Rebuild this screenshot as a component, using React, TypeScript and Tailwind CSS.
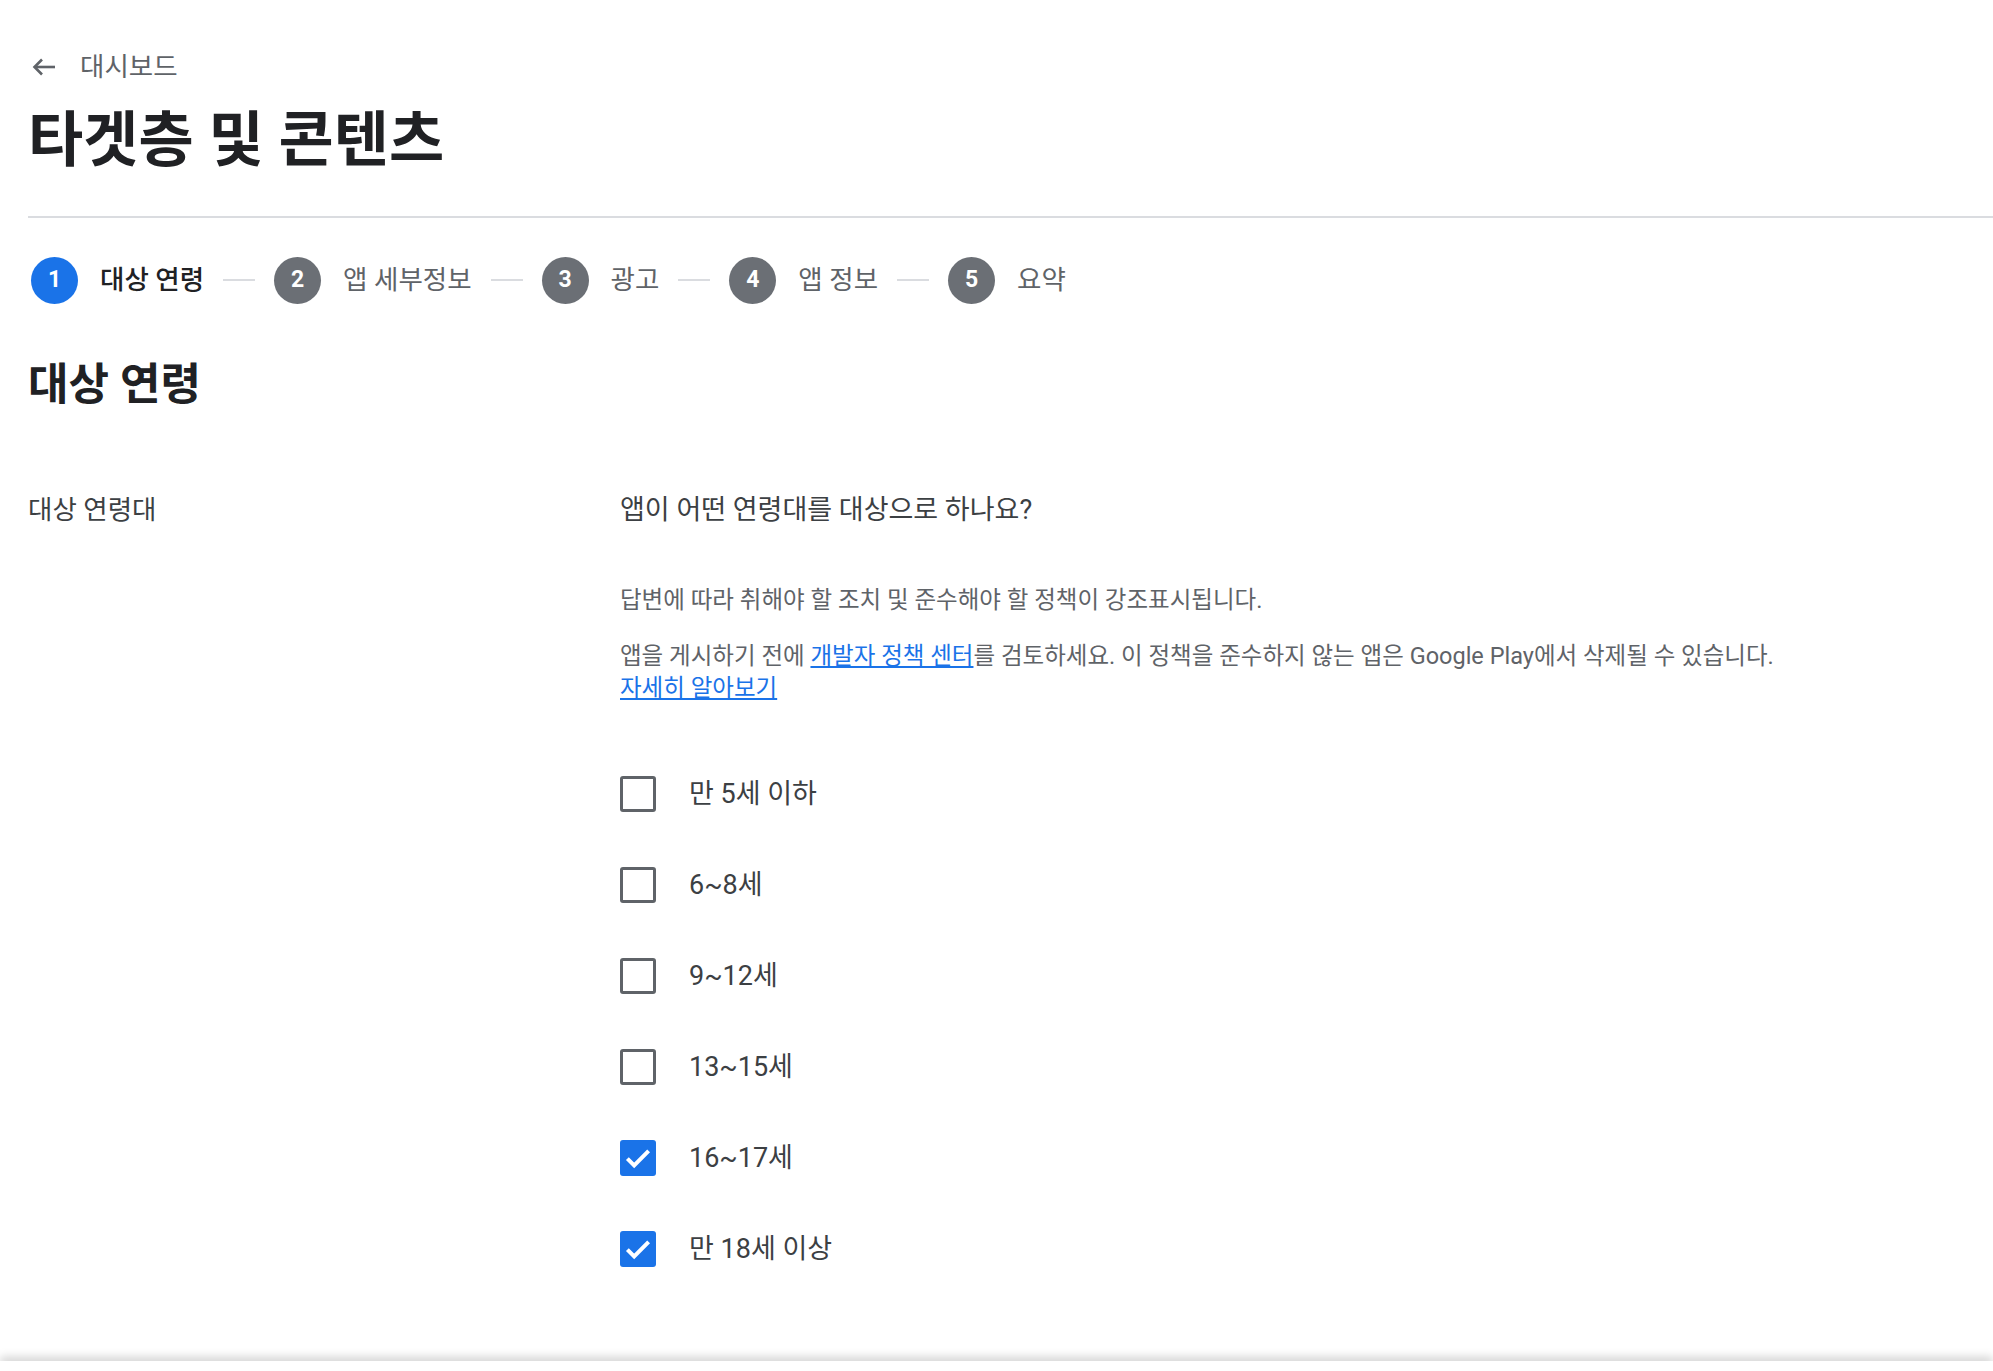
import { Fragment } from "react";

const FONT = "font-['Roboto','Noto_Sans_CJK_KR',sans-serif]";

const steps = ["대상 연령", "앱 세부정보", "광고", "앱 정보", "요약"];

const ages = [
  { label: "만 5세 이하", checked: false },
  { label: "6~8세", checked: false },
  { label: "9~12세", checked: false },
  { label: "13~15세", checked: false },
  { label: "16~17세", checked: true },
  { label: "만 18세 이상", checked: true },
];

function BackArrow() {
  return (
    <svg width="24" height="18" viewBox="0 0 24 18" fill="none" stroke="#5f6368" strokeWidth="2.6">
      <path d="M23 9H3" />
      <path d="M10 1.5 2.5 9l7.5 7.5" />
    </svg>
  );
}

function Checkbox({ checked }: { checked: boolean }) {
  if (checked) {
    return (
      <div className="flex h-[36px] w-[36px] items-center justify-center rounded-[3px] bg-[#1a73e8]">
        <svg width="34" height="34" viewBox="0 0 24 24" fill="none" stroke="#fff" strokeWidth="2.8">
          <path d="M4.5 12.5 9.3 17.3 19.5 7" />
        </svg>
      </div>
    );
  }
  return <div className="h-[36px] w-[36px] rounded-[3px] border-[3.5px] border-[#5f6368]" />;
}

function Stepper() {
  return (
    <div className="flex h-[48px] items-center">
      {steps.map((s, i) => (
        <Fragment key={s}>
          {i > 0 && <div className="mx-[19px] h-[2px] w-[32px] bg-[#dadce0]" />}
          <div className="flex items-center gap-[22px]">
            <div
              className={
                i === 0
                  ? "flex h-[47px] w-[47px] items-center justify-center rounded-full bg-[#1a73e8] text-[23px] font-bold text-white"
                  : "flex h-[47px] w-[47px] items-center justify-center rounded-full bg-[#6b6f75] text-[23px] font-bold text-white"
              }
            >
              {i + 1}
            </div>
            <span
              className={
                i === 0
                  ? "text-[26.5px] font-medium text-[#202124]"
                  : "text-[26.5px] text-[#5f6368]"
              }
            >
              {s}
            </span>
          </div>
        </Fragment>
      ))}
    </div>
  );
}

export default function App() {
  return (
    <div className={`${FONT} flex h-screen flex-col overflow-hidden bg-white`}>
      <div className="flex-1 overflow-hidden pl-[28px] pt-[47px]">
        <div className="flex h-[40px] items-center gap-[24px] pl-[4px]">
          <BackArrow />
          <span className="text-[26.5px] text-[#5f6368]">대시보드</span>
        </div>

        <h1 className="mt-[22px] text-[60px] font-bold leading-[64px] text-[#202124]">타겟층 및 콘텐츠</h1>

        <div className="mt-[43px] h-[2px] bg-[#dadce0]" />

        <div className="mt-[38px] pl-[3px]">
          <Stepper />
        </div>

        <h2 className="mt-[57px] text-[44px] font-bold leading-[48px] text-[#202124]">대상 연령</h2>

        <div className="mt-[83px] grid grid-cols-[592px_1fr]">
          <div className="text-[26.5px] leading-[36px] text-[#3c4043]">대상 연령대</div>
          <div>
            <div className="text-[27px] leading-[36px] text-[#3c4043]">앱이 어떤 연령대를 대상으로 하나요?</div>
            <p className="mt-[56px] text-[23.5px] leading-[32px] text-[#5f6368]">
              답변에 따라 취해야 할 조치 및 준수해야 할 정책이 강조표시됩니다.
            </p>
            <p className="mt-[24px] text-[23.5px] leading-[32px] text-[#5f6368]">
              앱을 게시하기 전에{" "}
              <a href="#" className="text-[#1a73e8] underline">
                개발자 정책 센터
              </a>
              를 검토하세요. 이 정책을 준수하지 않는 앱은 Google Play에서 삭제될 수 있습니다.
              <br />
              <a href="#" className="text-[#1a73e8] underline">
                자세히 알아보기
              </a>
            </p>

            <div className="mt-[66px] flex flex-col gap-[43px]">
              {ages.map((a) => (
                <label key={a.label} className="flex h-[48px] items-center gap-[33px]">
                  <Checkbox checked={a.checked} />
                  <span className="text-[27px] text-[#3c4043]">{a.label}</span>
                </label>
              ))}
            </div>
          </div>
        </div>
      </div>
      <div className="h-[10px] bg-white shadow-[0_-4px_10px_rgba(0,0,0,0.18)]" />
    </div>
  );
}
